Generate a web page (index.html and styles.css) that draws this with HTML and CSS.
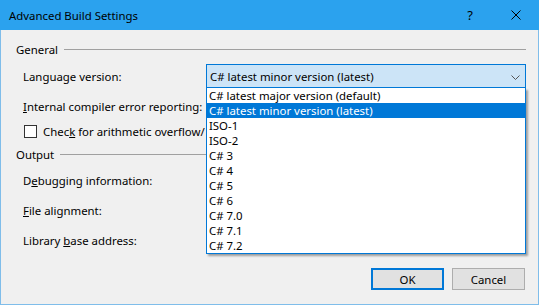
FILE: index.html
```html
<!DOCTYPE html>
<html>
<head>
<meta charset="utf-8">
<link rel="stylesheet" href="styles.css">
</head>
<body>
<div class="window">
  <div class="titlebar">
    <div class="title">Advanced Build Settings</div>
    <div class="tbtn">?</div>
    <div class="tbtn close">
      <svg width="10" height="10" viewBox="0 0 10 10"><path d="M0.5 0.5 L9.5 9.5 M9.5 0.5 L0.5 9.5" stroke="#000" stroke-width="1" fill="none"/></svg>
    </div>
  </div>
  <div class="content">
    <div class="group-head"><span>General</span><div class="rule"></div></div>
    <div class="row first">
      <span class="label">Language version:</span>
      <div class="combo focused">
        <span>C# latest minor version (latest)</span>
        <svg class="chev" width="9" height="5" viewBox="0 0 9 5"><path d="M0.5 0.5 L4.5 4.5 L8.5 0.5" stroke="#555" stroke-width="1" fill="none"/></svg>
      </div>
    </div>
    <div class="row">
      <span class="label"><u>I</u>nternal compiler error reporting:</span>
      <div class="combo"></div>
    </div>
    <div class="row check-row">
      <span class="checkbox"></span>
      <span class="check-label">Chec<u>k</u> for arithmetic overflow/underflow</span>
    </div>
    <div class="group-head out"><span>Output</span><div class="rule"></div></div>
    <div class="row second">
      <span class="label">D<u>e</u>bugging information:</span>
      <div class="combo"></div>
    </div>
    <div class="row">
      <span class="label"><u>F</u>ile alignment:</span>
      <div class="combo"></div>
    </div>
    <div class="row">
      <span class="label">Library <u>b</u>ase address:</span>
      <div class="combo"></div>
    </div>
    <div class="buttons">
      <button class="btn default">OK</button>
      <button class="btn">Cancel</button>
    </div>
  </div>
  <ul class="dropdown">
    <li>C# latest major version (default)</li>
    <li class="sel">C# latest minor version (latest)</li>
    <li>ISO-1</li>
    <li>ISO-2</li>
    <li>C# 3</li>
    <li>C# 4</li>
    <li>C# 5</li>
    <li>C# 6</li>
    <li>C# 7.0</li>
    <li>C# 7.1</li>
    <li>C# 7.2</li>
  </ul>
</div>
</body>
</html>
```
FILE: styles.css
```css
* { box-sizing: border-box; }
html, body { margin: 0; padding: 0; }
body {
  font-family: "Noto Sans", "DejaVu Sans", sans-serif;
  font-size: 11.4px;
  color: #000;
  background: #fff;
}
.window {
  position: relative;
  width: 539px;
  height: 305px;
  background: #f0f0f0;
  border: 1px solid #7fbdea;
  border-top: none;
  display: flex;
  flex-direction: column;
}
.titlebar {
  height: 30px;
  background: #2ba2ee;
  margin: 0 -1px;
  display: flex;
  align-items: center;
}
.title {
  flex: 1;
  padding-left: 9px;
}
.tbtn {
  width: 46px;
  height: 30px;
  display: flex;
  align-items: center;
  justify-content: center;
  font-size: 13px;
}
.content {
  flex: 1;
  display: flex;
  flex-direction: column;
  padding: 10px 12px 0 15px;
}
.group-head {
  height: 18px;
  display: flex;
  align-items: center;
  gap: 6px;
}
.group-head.out { margin-top: 4px; }
.rule {
  flex: 1;
  height: 1px;
  background: #a0a0a0;
}
.row {
  height: 30px;
  display: flex;
  align-items: center;
  white-space: nowrap;
}
.row.first { margin-top: 3px; }
.row.second { margin-top: 2px; }
.label {
  width: 190px;
  padding-left: 7px;
}
.combo {
  width: 320px;
  height: 24px;
  border: 1px solid #adadad;
  background: #e5e5e5;
  display: flex;
  align-items: center;
  padding-left: 3px;
  position: relative;
}
.combo.focused {
  border-color: #0078d7;
  background: #cce4f7;
}
.chev {
  position: absolute;
  right: 5px;
  top: 10px;
}
.check-row { height: 20px; }
.checkbox {
  width: 13px;
  height: 13px;
  border: 1px solid #333;
  background: #fff;
  margin-left: 8px;
  margin-right: 6px;
  flex: none;
}
.check-label {
  width: 162px;
  overflow: hidden;
}
.buttons {
  margin-top: 13px;
  display: flex;
  justify-content: flex-end;
  gap: 8px;
  padding-right: 1px;
}
.btn {
  width: 73px;
  height: 22px;
  font-family: inherit;
  font-size: 11.4px;
  color: #000;
  background: #e1e1e1;
  border: 1px solid #adadad;
  padding: 0;
}
.btn.default {
  border: 2px solid #0078d7;
}
.dropdown {
  position: absolute;
  left: 205px;
  top: 88px;
  width: 320px;
  margin: 0;
  padding: 0;
  list-style: none;
  background: #fff;
  border: 1px solid #0078d7;
  border-top: none;
  box-shadow: 2px 2px 2px rgba(0,0,0,0.35);
}
.dropdown li {
  height: 15px;
  line-height: 15px;
  padding-left: 2px;
  white-space: nowrap;
}
.dropdown li.sel {
  background: #0078d7;
  color: #fff;
}
```
